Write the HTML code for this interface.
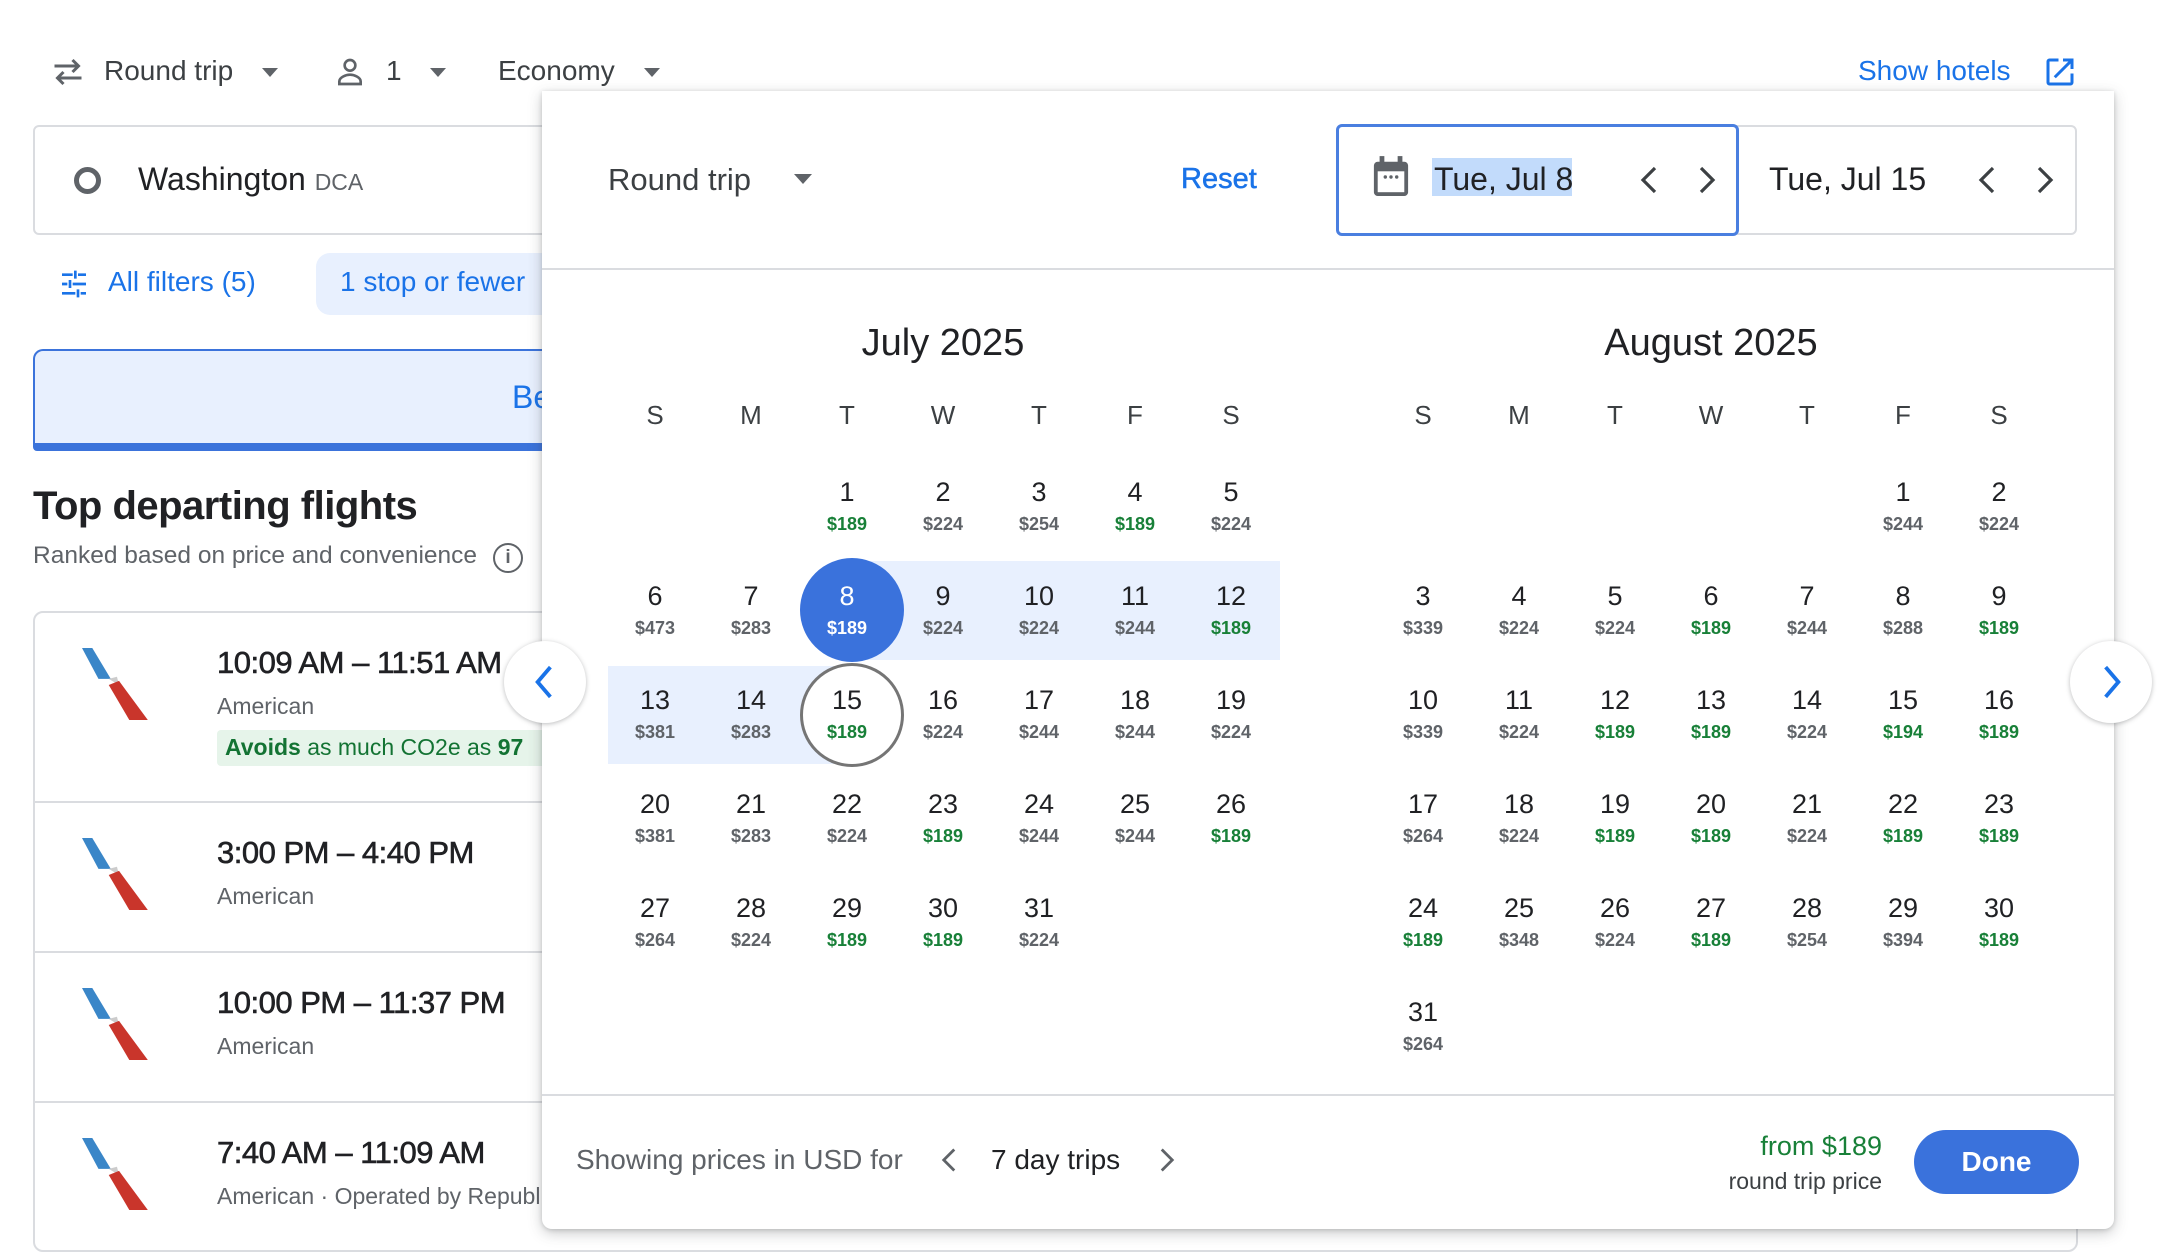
<!DOCTYPE html>
<html><head><meta charset="utf-8"><style>
*{box-sizing:border-box;margin:0;padding:0}
body{width:2158px;height:1256px;background:#fff;font-family:"Liberation Sans",Arial,sans-serif;color:#202124;position:relative;overflow:hidden}
.a{position:absolute;white-space:nowrap}
.g{color:#188038}
.panel{position:absolute;left:542px;top:91px;width:1572px;height:1138px;background:#fff;border-radius:0 0 10px 10px;box-shadow:0 4px 14px rgba(60,64,67,.28),0 1px 4px rgba(60,64,67,.2)}
.grid{position:absolute;display:grid;grid-template-columns:repeat(7,96px);grid-auto-rows:104px;width:672px}
.grid div{display:flex;flex-direction:column;align-items:center;justify-content:center;position:relative;z-index:2}
.grid b{font-weight:400;font-size:27px;line-height:32px;color:#202124}
.grid i{font-style:normal;font-weight:700;font-size:18px;line-height:24px;color:#5f6368;margin-top:4px}
.grid i.g{color:#188038}
.wd{position:absolute;top:400px;display:grid;grid-template-columns:repeat(7,96px);font-size:26px;color:#3c4043;text-align:center}
.card-t{font-size:31px;font-weight:400;letter-spacing:-0.5px;-webkit-text-stroke:0.6px #202124}
.card-s{font-size:23px;color:#5f6368}
</style></head><body>

<svg class="a" style="left:50px;top:57px" width="36" height="30" viewBox="0 0 24 20"><path d="M3 6h16M15 2l4 4-4 4M21 14H5M9 10l-4 4 4 4" fill="none" stroke="#5f6368" stroke-width="2"/></svg>
<div class="a" style="left:104px;top:55px;font-size:28px;color:#3c4043">Round trip</div>
<div class="a" style="left:262px;top:68px;border:8px solid transparent;border-top:9px solid #5f6368"></div>
<svg class="a" style="left:334px;top:55px" width="32" height="34" viewBox="0 0 24 24"><circle cx="12" cy="7" r="4" fill="none" stroke="#5f6368" stroke-width="2"/><path d="M4 21v-2c0-3 5-5 8-5s8 2 8 5v2z" fill="none" stroke="#5f6368" stroke-width="2"/></svg>
<div class="a" style="left:386px;top:55px;font-size:28px;color:#3c4043">1</div>
<div class="a" style="left:430px;top:68px;border:8px solid transparent;border-top:9px solid #5f6368"></div>
<div class="a" style="left:498px;top:55px;font-size:28px;color:#3c4043">Economy</div>
<div class="a" style="left:644px;top:68px;border:8px solid transparent;border-top:9px solid #5f6368"></div>
<div class="a" style="left:1858px;top:55px;font-size:28px;color:#1a73e8">Show hotels</div>
<svg class="a" style="left:2042px;top:54px" width="36" height="36" viewBox="0 0 24 24"><path d="M19 19H5V5h6V3H5a2 2 0 0 0-2 2v14a2 2 0 0 0 2 2h14a2 2 0 0 0 2-2v-6h-2zM14 3v2h3.6l-9.8 9.8 1.4 1.4L19 6.4V10h2V3z" fill="#1a73e8"/></svg>

<div class="a" style="left:33px;top:125px;width:1000px;height:110px;border:2px solid #dadce0;border-radius:6px"></div>
<div class="a" style="left:74px;top:167px;width:27px;height:27px;border:5px solid #5f6368;border-radius:50%"></div>
<div class="a" style="left:138px;top:161px;font-size:32px;color:#202124">Washington <span style="font-size:23px;color:#5f6368">DCA</span></div>

<svg class="a" style="left:58px;top:268px" width="32" height="32" viewBox="0 0 24 24"><path d="M3 5h8M15 5h6M13 2v6M3 12h4M11 12h10M9 9v6M3 19h10M17 19h4M15 16v6" stroke="#1a73e8" stroke-width="2" fill="none"/></svg>
<div class="a" style="left:108px;top:266px;font-size:28px;color:#1a73e8">All filters (5)</div>
<div class="a" style="left:316px;top:253px;width:300px;height:62px;background:#e8f0fe;border-radius:14px"></div>
<div class="a" style="left:340px;top:266px;font-size:28px;color:#1a73e8">1 stop or fewer</div>

<div class="a" style="left:33px;top:349px;width:1000px;height:102px;background:#e8f0fe;border:2px solid #3b73db;border-bottom:8px solid #3b73db;border-radius:10px 10px 4px 4px"></div>
<div class="a" style="left:512px;top:379px;font-size:32px;color:#1a73e8">Best</div>

<div class="a" style="left:33px;top:484px;font-size:40px;font-weight:700;letter-spacing:-0.5px">Top departing flights</div>
<div class="a" style="left:33px;top:542px;font-size:24.5px;color:#5f6368">Ranked based on price and convenience</div>
<div class="a" style="left:493px;top:543px;width:30px;height:30px;border:2.5px solid #5f6368;border-radius:50%;font-size:19px;text-align:center;line-height:25px;color:#5f6368;font-weight:700">i</div>

<div class="a" style="left:33px;top:611px;width:2045px;height:641px;border:2px solid #dadce0;border-radius:10px"></div>
<div class="a" style="left:33px;top:801px;width:2045px;height:2px;background:#dadce0"></div>
<div class="a" style="left:33px;top:951px;width:2045px;height:2px;background:#dadce0"></div>
<div class="a" style="left:33px;top:1101px;width:2045px;height:2px;background:#dadce0"></div>

<svg class="a" style="left:82px;top:648px" width="72" height="72" viewBox="0 0 70 70"><path d="M0 0h10l18 30h-12z" fill="#3a86c8"/><path d="M26 30l8-2 2 8z" fill="#ccc"/><path d="M26 36l10-4 28 38h-18z" fill="#c9352b"/></svg>
<svg class="a" style="left:82px;top:838px" width="72" height="72" viewBox="0 0 70 70"><path d="M0 0h10l18 30h-12z" fill="#3a86c8"/><path d="M26 30l8-2 2 8z" fill="#ccc"/><path d="M26 36l10-4 28 38h-18z" fill="#c9352b"/></svg>
<svg class="a" style="left:82px;top:988px" width="72" height="72" viewBox="0 0 70 70"><path d="M0 0h10l18 30h-12z" fill="#3a86c8"/><path d="M26 30l8-2 2 8z" fill="#ccc"/><path d="M26 36l10-4 28 38h-18z" fill="#c9352b"/></svg>
<svg class="a" style="left:82px;top:1138px" width="72" height="72" viewBox="0 0 70 70"><path d="M0 0h10l18 30h-12z" fill="#3a86c8"/><path d="M26 30l8-2 2 8z" fill="#ccc"/><path d="M26 36l10-4 28 38h-18z" fill="#c9352b"/></svg>

<div class="a card-t" style="left:217px;top:645px">10:09 AM – 11:51 AM</div>
<div class="a card-s" style="left:217px;top:693px">American</div>
<div class="a" style="left:217px;top:730px;width:340px;height:36px;background:#e6f4ea;border-radius:4px"></div>
<div class="a" style="left:225px;top:734px;font-size:23px;color:#137333"><b>Avoids</b> as much CO2e as <b>97</b></div>
<div class="a card-t" style="left:217px;top:835px">3:00 PM – 4:40 PM</div>
<div class="a card-s" style="left:217px;top:883px">American</div>
<div class="a card-t" style="left:217px;top:985px">10:00 PM – 11:37 PM</div>
<div class="a card-s" style="left:217px;top:1033px">American</div>
<div class="a card-t" style="left:217px;top:1135px">7:40 AM – 11:09 AM</div>
<div class="a card-s" style="left:217px;top:1183px">American · Operated by Republic</div>

<div class="panel"></div>
<div class="a" style="left:608px;top:162px;font-size:31px;color:#3c4043">Round trip</div>
<div class="a" style="left:794px;top:174px;border:9px solid transparent;border-top:10px solid #5f6368"></div>
<div class="a" style="left:1181px;top:163px;font-size:29px;color:#1a73e8;-webkit-text-stroke:0.5px #1a73e8">Reset</div>

<div class="a" style="left:1336px;top:125px;width:741px;height:110px;border:2px solid #dadce0;border-radius:6px"></div>
<div class="a" style="left:1336px;top:124px;width:403px;height:112px;border:3px solid #4a7fe0;border-radius:6px;background:#fff"></div>
<svg class="a" style="left:1372px;top:156px" width="38" height="42" viewBox="0 0 20 22"><rect x="1" y="3" width="18" height="18" rx="2" fill="#5f6368"/><rect x="3" y="8" width="14" height="11" fill="#fff"/><rect x="4" y="0" width="2.5" height="5" fill="#5f6368"/><rect x="13.5" y="0" width="2.5" height="5" fill="#5f6368"/><circle cx="7" cy="11" r=".9" fill="#5f6368"/><circle cx="10" cy="11" r=".9" fill="#5f6368"/><circle cx="13" cy="11" r=".9" fill="#5f6368"/></svg>
<div class="a" style="left:1432px;top:158px;height:38px;width:140px;background:#c2dbfb"></div>
<div class="a" style="left:1434px;top:161px;font-size:32px;color:#202124">Tue, Jul 8</div>
<svg class="a" style="left:1636px;top:164px" width="26" height="32" viewBox="0 0 12 16"><path d="M9 2L3 8l6 6" fill="none" stroke="#3c4043" stroke-width="1.6"/></svg>
<svg class="a" style="left:1694px;top:164px" width="26" height="32" viewBox="0 0 12 16"><path d="M3 2l6 6-6 6" fill="none" stroke="#3c4043" stroke-width="1.6"/></svg>
<div class="a" style="left:1769px;top:161px;font-size:32px;color:#202124">Tue, Jul 15</div>
<svg class="a" style="left:1974px;top:164px" width="26" height="32" viewBox="0 0 12 16"><path d="M9 2L3 8l6 6" fill="none" stroke="#3c4043" stroke-width="1.6"/></svg>
<svg class="a" style="left:2032px;top:164px" width="26" height="32" viewBox="0 0 12 16"><path d="M3 2l6 6-6 6" fill="none" stroke="#3c4043" stroke-width="1.6"/></svg>

<div class="a" style="left:542px;top:268px;width:1572px;height:2px;background:#dadce0"></div>

<div class="a" style="left:607px;top:322px;width:672px;text-align:center;font-size:38px;color:#202124">July 2025</div>
<div class="a" style="left:1375px;top:322px;width:672px;text-align:center;font-size:38px;color:#202124">August 2025</div>
<div class="wd" style="left:607px"><span>S</span><span>M</span><span>T</span><span>W</span><span>T</span><span>F</span><span>S</span></div>
<div class="wd" style="left:1375px"><span>S</span><span>M</span><span>T</span><span>W</span><span>T</span><span>F</span><span>S</span></div>

<div class="a" style="left:848px;top:561px;width:432px;height:99px;background:#e8f0fe"></div>
<div class="a" style="left:608px;top:666px;width:240px;height:98px;background:#e8f0fe"></div>
<div class="a" style="left:800px;top:558px;width:104px;height:104px;border-radius:50%;background:#3a72dc;z-index:1"></div>
<div class="a" style="left:800px;top:663px;width:104px;height:104px;border-radius:50%;border:3px solid #757575;background:#fff;z-index:1"></div>

<div class="grid" style="left:607px;top:454px">
<div></div><div></div><div><b>1</b><i class="g">$189</i></div><div><b>2</b><i>$224</i></div><div><b>3</b><i>$254</i></div><div><b>4</b><i class="g">$189</i></div><div><b>5</b><i>$224</i></div>
<div><b>6</b><i>$473</i></div><div><b>7</b><i>$283</i></div><div><b style="color:#fff">8</b><i style="color:#fff">$189</i></div><div><b>9</b><i>$224</i></div><div><b>10</b><i>$224</i></div><div><b>11</b><i>$244</i></div><div><b>12</b><i class="g">$189</i></div>
<div><b>13</b><i>$381</i></div><div><b>14</b><i>$283</i></div><div><b>15</b><i class="g">$189</i></div><div><b>16</b><i>$224</i></div><div><b>17</b><i>$244</i></div><div><b>18</b><i>$244</i></div><div><b>19</b><i>$224</i></div>
<div><b>20</b><i>$381</i></div><div><b>21</b><i>$283</i></div><div><b>22</b><i>$224</i></div><div><b>23</b><i class="g">$189</i></div><div><b>24</b><i>$244</i></div><div><b>25</b><i>$244</i></div><div><b>26</b><i class="g">$189</i></div>
<div><b>27</b><i>$264</i></div><div><b>28</b><i>$224</i></div><div><b>29</b><i class="g">$189</i></div><div><b>30</b><i class="g">$189</i></div><div><b>31</b><i>$224</i></div>
</div>

<div class="grid" style="left:1375px;top:454px">
<div></div><div></div><div></div><div></div><div></div><div><b>1</b><i>$244</i></div><div><b>2</b><i>$224</i></div>
<div><b>3</b><i>$339</i></div><div><b>4</b><i>$224</i></div><div><b>5</b><i>$224</i></div><div><b>6</b><i class="g">$189</i></div><div><b>7</b><i>$244</i></div><div><b>8</b><i>$288</i></div><div><b>9</b><i class="g">$189</i></div>
<div><b>10</b><i>$339</i></div><div><b>11</b><i>$224</i></div><div><b>12</b><i class="g">$189</i></div><div><b>13</b><i class="g">$189</i></div><div><b>14</b><i>$224</i></div><div><b>15</b><i class="g">$194</i></div><div><b>16</b><i class="g">$189</i></div>
<div><b>17</b><i>$264</i></div><div><b>18</b><i>$224</i></div><div><b>19</b><i class="g">$189</i></div><div><b>20</b><i class="g">$189</i></div><div><b>21</b><i>$224</i></div><div><b>22</b><i class="g">$189</i></div><div><b>23</b><i class="g">$189</i></div>
<div><b>24</b><i class="g">$189</i></div><div><b>25</b><i>$348</i></div><div><b>26</b><i>$224</i></div><div><b>27</b><i class="g">$189</i></div><div><b>28</b><i>$254</i></div><div><b>29</b><i>$394</i></div><div><b>30</b><i class="g">$189</i></div>
<div><b>31</b><i>$264</i></div>
</div>

<div class="a" style="left:504px;top:641px;width:82px;height:82px;border-radius:50%;background:#fff;box-shadow:0 1px 5px rgba(60,64,67,.35)"></div>
<svg class="a" style="left:530px;top:665px" width="28" height="34" viewBox="0 0 12 16"><path d="M9 1L3 8l6 7" fill="none" stroke="#1a73e8" stroke-width="1.8"/></svg>
<div class="a" style="left:2070px;top:641px;width:82px;height:82px;border-radius:50%;background:#fff;box-shadow:0 1px 5px rgba(60,64,67,.35)"></div>
<svg class="a" style="left:2098px;top:665px" width="28" height="34" viewBox="0 0 12 16"><path d="M3 1l6 7-6 7" fill="none" stroke="#1a73e8" stroke-width="1.8"/></svg>

<div class="a" style="left:542px;top:1094px;width:1572px;height:2px;background:#dadce0"></div>
<div class="a" style="left:576px;top:1144px;font-size:28px;color:#5f6368">Showing prices in USD for</div>
<svg class="a" style="left:938px;top:1146px" width="22" height="28" viewBox="0 0 12 16"><path d="M9 2L3 8l6 6" fill="none" stroke="#5f6368" stroke-width="1.6"/></svg>
<div class="a" style="left:991px;top:1144px;font-size:28px;color:#202124">7 day trips</div>
<svg class="a" style="left:1156px;top:1146px" width="22" height="28" viewBox="0 0 12 16"><path d="M3 2l6 6-6 6" fill="none" stroke="#5f6368" stroke-width="1.6"/></svg>
<div class="a" style="left:1680px;top:1131px;width:202px;text-align:right;font-size:27px;color:#188038">from $189</div>
<div class="a" style="left:1660px;top:1168px;width:222px;text-align:right;font-size:23px;color:#3c4043">round trip price</div>
<div class="a" style="left:1914px;top:1130px;width:165px;height:64px;border-radius:32px;background:#3a72dc;color:#fff;font-size:28px;text-align:center;line-height:64px;font-weight:700">Done</div>
</body></html>
